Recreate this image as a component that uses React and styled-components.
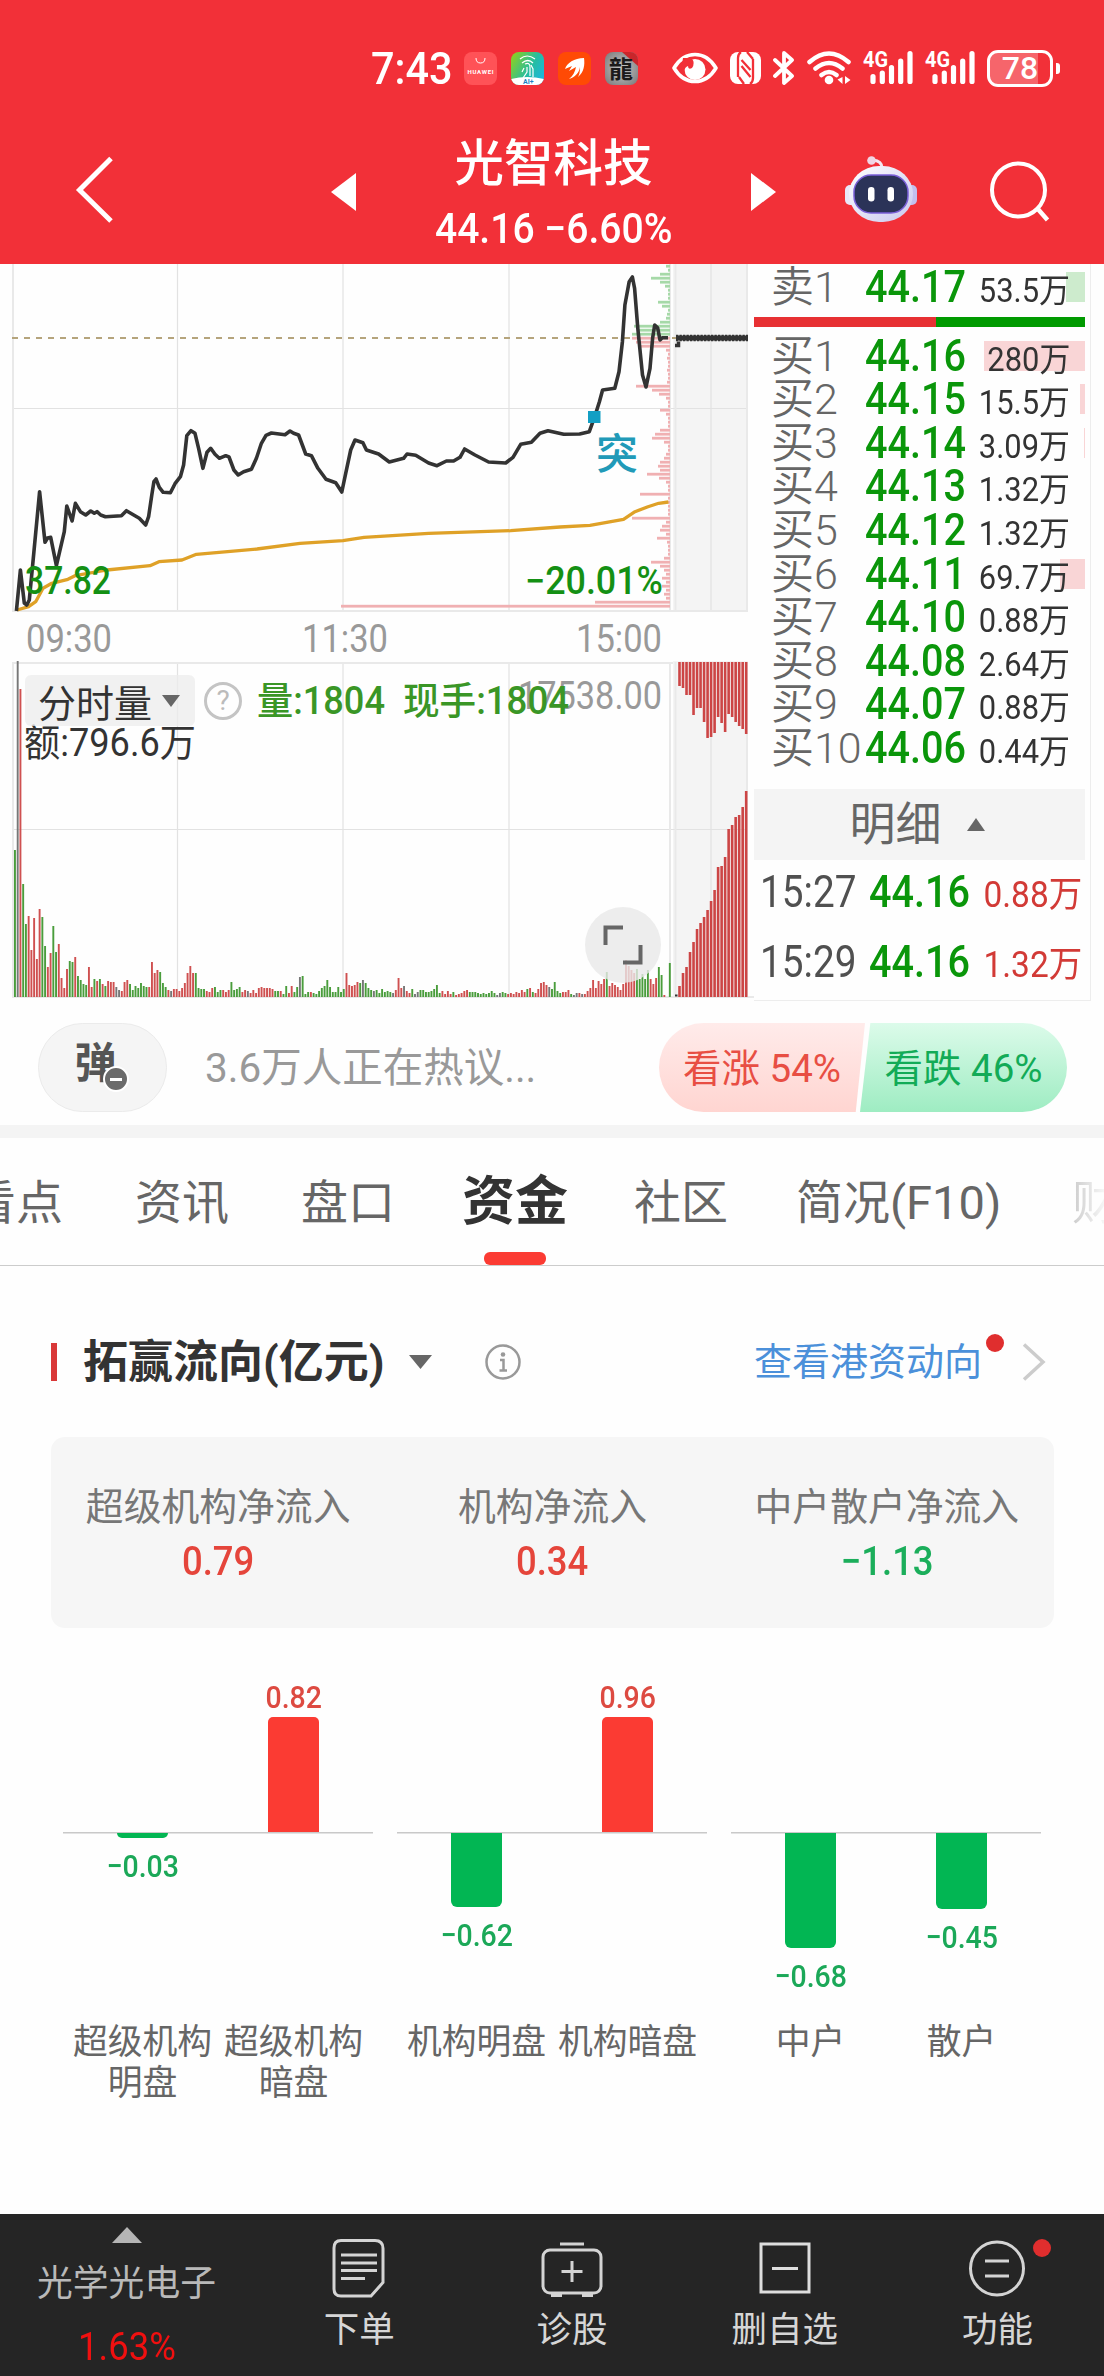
import React from "react";
import styled, { createGlobalStyle } from "styled-components";

const GlobalStyle = createGlobalStyle`
  * {
    box-sizing: border-box;
  }
  body {
    margin: 0;
    background: #fff;
    font-family: Roboto, "Noto Sans CJK SC", sans-serif;
  }
  svg {
    display: block;
    flex: none;
  }
`;

const UP = "#fb3b33";
const DOWN = "#02b653";

const pricePoints =
  "16.4,611 20.4,570 24.3,603 26.8,605 29.3,600 33.9,552 39.6,491.7 45,542.3 47.5,538 50.7,537.3 56.4,565.7 64.3,531.7 66.8,506 72.1,521 75.4,503.3 80.4,511.7 85.7,515 90.7,511 94.3,513.3 97,511.7 100.7,515 105.4,516.7 121.4,515.7 126.4,510.7 139.3,518.3 145.7,525 148.6,516.7 151.8,495 153.9,481.7 156,479 159.3,487.3 163.2,492.3 170.4,492.7 175,483.7 180.4,476.7 183.6,465 186.8,435.7 191,430.7 195,433.3 198.6,448.3 202.9,468.3 207,452.3 210.7,448.3 215,454.3 219.3,458.3 225.7,455.7 229,457 233.9,470 238.2,475 243.6,471.7 251.4,469.3 256.4,458.3 261.4,443.3 266,435.3 271.4,433 285,434.7 290,431 293.6,433.3 298.6,435 305.7,454 311.4,455.7 317.9,468.3 326,479.3 335.7,482.7 341.8,492 345.7,473.3 350.7,450 355,440 362.9,442.7 366.4,450 378.6,454 389.3,462 403.6,458.3 407,454 415.7,455.3 428.6,463 437,465.7 446.4,461 453.6,461 460,457.3 464.6,449 475,455 488.6,462 505.7,463 513,457.3 520.7,444.3 531.4,442.3 540,433.3 548,430.7 563.7,434.3 579.6,434 589.3,431.7 594.7,416.7 599.4,401.7 602.6,390 614.8,388.3 619,371.7 622.4,341.7 624.9,305 629.2,281.7 632.4,277 634.6,288.3 637.8,328.3 642.5,375 646,387 650,368.3 652.6,338.3 654.7,325 657.6,327.7 660,340 662.3,337.7 668,337.7";

const averagePoints =
  "17,610 28.6,606.7 35.7,601.7 43,588.3 51.8,583.3 67.9,579.3 75,575.7 107,570 150,565.7 159,561.7 182,560 196.4,554.3 257,549 300,543.3 343,540.7 364,537.3 428.6,533.3 510.7,530.7 560,527 590,525.3 623.5,519.3 635,511.7 648,506.7 658.7,503.3 668.4,502";

const chips = [
  4, 2, 10, 19, 10, 5, 2, 2, 2, 12, 8, 2, 3, 4, 10, 36, 33, 38, 38, 34, 30, 4,
  2, 3, 2, 2, 3, 2, 2, 3, 34, 18, 11, 4, 2, 2, 10, 4, 2, 2, 2, 10, 15, 18, 6, 2,
  2, 4, 6, 10, 12, 10, 23, 11, 4, 2, 2, 30, 2, 2, 2, 2, 2, 38, 4, 8, 10, 4, 13,
  3, 2, 2, 2, 6, 19, 10, 6, 4, 8, 4, 8, 4, 6, 4, 75, 329,
];

// one entry per minute: bar height + colour (r up, g down, k flat)
const volumes =
  "147g 337k 308r 113g 73g 81r 47r 79r 38r 88r 80g 51g 30r 44r 71g 45g 53r 19r 9r 28r 36g 35g 40r 21g 17g 13g 12g 30r 10r 18g 16r 18g 13r 11g 16r 15r 15r 10k 7k 6r 15r 17r 13g 7g 11g 9g 14g 11g 10g 10r 35r 24r 27r 25g 14g 10g 7r 6k 8r 8r 6r 9r 14r 24r 31r 24r 24g 9g 8g 8g 6r 5r 9r 10g 5g 7g 7r 5r 7r 15g 7g 8g 10g 5r 7r 6k 4r 7r 4r 9r 10r 9r 9r 9r 8r 6g 6g 6r 3g 11g 4r 11r 5g 10g 20k 21g 3g 5g 5r 4g 3g 6g 9g 11g 17g 10g 5g 5g 10g 5g 8g 24r 12r 11r 12r 15r 14g 17k 14g 9g 7g 6k 7g 4g 8g 5g 6g 5g 4k 7r 19r 9r 11k 6r 4r 8g 3k 5k 7g 7g 5g 5g 6g 8g 12g 4g 6r 3r 6r 3r 5g 2r 3r 4r 6r 7r 5g 5g 5g 4g 3g 4g 3g 4g 6g 4g 2k 4k 5g 4g 3r 4r 3r 5r 4r 7r 5r 8g 9r 5g 4r 8r 14r 15r 12r 10k 8g 15g 6g 4g 5r 5r 7r 3g 2k 4k 4r 3k 3r 6r 9r 17r 9r 16r 13r 18r 25g 11r 14r 12r 10r 7r 13r 37r 31r 27r 24r 28g 18g 23g 18g 27g 18r 13r 19r 30g 22g 2r 0g 34g".split(
    " "
  );
const volumeColors = { r: "#cf5050", g: "#4a9d3c", k: "#777" };

const afterMatched = [
  11, 24, 30, 45, 55, 68, 74, 80, 87, 96, 107, 130, 131, 140, 168, 172, 180,
  182, 190, 206,
];
const afterPending = [
  24, 26, 33, 33, 53, 46, 46, 60, 76, 75, 71, 55, 61, 70, 52, 55, 60, 64, 67,
  72,
];

const buyRows = [
  { label: "买1", price: "44.16", volume: "280万", depth: 101 },
  { label: "买2", price: "44.15", volume: "15.5万", depth: 5 },
  { label: "买3", price: "44.14", volume: "3.09万", depth: 1 },
  { label: "买4", price: "44.13", volume: "1.32万", depth: 0 },
  { label: "买5", price: "44.12", volume: "1.32万", depth: 0 },
  { label: "买6", price: "44.11", volume: "69.7万", depth: 25 },
  { label: "买7", price: "44.10", volume: "0.88万", depth: 0 },
  { label: "买8", price: "44.08", volume: "2.64万", depth: 0 },
  { label: "买9", price: "44.07", volume: "0.88万", depth: 0 },
  { label: "买10", price: "44.06", volume: "0.44万", depth: 0 },
];

const ticks = [
  { time: "15:27", price: "44.16", volume: "0.88万" },
  { time: "15:29", price: "44.16", volume: "1.32万" },
];

const totals = [
  { label: "超级机构净流入", value: "0.79", color: "#e5453b" },
  { label: "机构净流入", value: "0.34", color: "#e5453b" },
  { label: "中户散户净流入", value: "−1.13", color: "#1bae5b" },
];

const flows = [
  [
    { label: "超级机构明盘", value: "−0.03", height: 5 },
    { label: "超级机构暗盘", value: "0.82", height: 115, up: true },
  ],
  [
    { label: "机构明盘", value: "−0.62", height: 74 },
    { label: "机构暗盘", value: "0.96", height: 115, up: true },
  ],
  [
    { label: "中户", value: "−0.68", height: 115 },
    { label: "散户", value: "−0.45", height: 76 },
  ],
];

function Signal() {
  return (
    <svg width="50" height="36" viewBox="0 0 50 36" overflow="visible">
      <text
        x="0"
        y="17"
        fontSize="21.5"
        fontWeight="700"
        fill="#fff"
        textLength="25"
        lengthAdjust="spacingAndGlyphs"
      >
        4G
      </text>
      <path
        d="M10 26.500v5M19.300 23v8.500M28.500 17.500v14M37.700 11v20.500M47 3.500v28"
        stroke="#fff"
        strokeWidth="5.200"
        strokeLinecap="round"
      />
    </svg>
  );
}

function StatusIcons() {
  return (
    <>
      <svg width="46" height="36" viewBox="0 0 46 36">
        <path
          d="M2 18C8 8 15 4.500 23 4.500S38 8 44 18C38 28 31 31.500 23 31.500S8 28 2 18z"
          fill="none"
          stroke="#fff"
          strokeWidth="3.600"
          strokeLinejoin="round"
        />
        <circle cx="23" cy="19.500" r="10.500" fill="#fff" />
        <path d="M11 8h8.500q4 5 .5 10-4 2-4-2-3 1-4 5h-3z" fill="#f23038" />
      </svg>
      <svg width="31" height="36" viewBox="0 0 31 36">
        <rect x="0" y="2" width="31" height="32" rx="8" fill="#fff" />
        <g fill="none" stroke="#f23038" strokeWidth="2.300">
          <path d="M11 2q-3 2-3 6v19M20 34q3-2 3-6V9" />
          <path d="M11.500 10l9 10M11.500 16l9 11M9 27l5 7M17 2l6 7" />
        </g>
      </svg>
      <svg width="22" height="36" viewBox="0 0 22 36">
        <path
          d="M2 10l17 16-8 7V3l8 7L2 26"
          fill="none"
          stroke="#fff"
          strokeWidth="3.800"
          strokeLinejoin="round"
          strokeLinecap="round"
        />
      </svg>
      <svg width="44" height="36" viewBox="0 0 44 36">
        <g fill="none" stroke="#fff" strokeWidth="4.500" strokeLinecap="round">
          <path d="M2.500 12Q22-5 41.500 12M8.500 18.500q13.500-11 27 0M14.500 25q7.500-6 15 0" />
        </g>
        <circle cx="22" cy="30" r="4.300" fill="#fff" />
        <path d="M35.500 27v7l-5-4.500zM38 34v-8l5.500 4z" fill="#fff" />
      </svg>
      <Signal />
      <Signal />
    </>
  );
}

function Robot() {
  return (
    <svg width="72" height="68" viewBox="0 0 72 68">
      <defs>
        <linearGradient id="shell" x1="0" y1="0" x2="1" y2="1">
          <stop offset="0" stopColor="#fff" />
          <stop offset="1" stopColor="#c9c8ee" />
        </linearGradient>
      </defs>
      <path d="M37 12q0-7-9-8" fill="none" stroke="#f5e6f0" strokeWidth="3" />
      <circle cx="26.500" cy="4.500" r="4.300" fill="#f0d5e4" />
      <rect x="0" y="29" width="12" height="20" rx="5" fill="#e9e7f8" />
      <rect x="60" y="29" width="12" height="20" rx="5" fill="#c3bfee" />
      <rect x="4" y="10" width="64" height="56" rx="30" fill="url(#shell)" />
      <rect x="9" y="19" width="54" height="38" rx="17" fill="#2b3358" stroke="#7a5fd8" strokeWidth="1.500" />
      <rect x="23" y="31" width="6.500" height="14.500" rx="3.200" fill="#fff" />
      <rect x="42.500" y="31" width="6.500" height="14.500" rx="3.200" fill="#fff" />
    </svg>
  );
}

function AppIcons() {
  return (
    <AppIconRow>
      <AppIcon $bg="#ff5257">
        <svg width="33" height="33" viewBox="0 0 33 33">
          <path d="M12 6q0 5 4.500 5T21 6" fill="none" stroke="#fff" strokeWidth="1" />
          <text x="3.500" y="21.500" fontSize="6" fontWeight="700" fill="#fff" textLength="26">
            HUAWEI
          </text>
        </svg>
      </AppIcon>
      <AppIcon $bg="linear-gradient(120deg, #84cf2c 10%, #26bda0 55%, #17b5ee)">
        <svg width="33" height="33" viewBox="0 0 33 33">
          <g fill="none" stroke="#fff" strokeWidth="1.200">
            <path d="M9 7q7-6 15 0M11 11q6-5 11 0M14 12q5-2 5 3v9M16 15v5l-4 6M20 13l2 4v8M13 16l-2 4" />
          </g>
          <path d="M0 27q16-4 33 0v6H0z" fill="#fff" />
          <text x="12" y="32" fontSize="7" fontWeight="700" fill="#1b7fc4">
            AI+
          </text>
        </svg>
      </AppIcon>
      <AppIcon $bg="#ff4a05">
        <svg width="33" height="33" viewBox="0 0 33 33">
          <path
            d="M26 6C16 6 9 11 7 17l7-3-3 5 7-4c-1 5-3 9-7 12 6-2 10-6 11-12q0 7-2 10c6-5 7-12 6-19z"
            fill="#fff"
          />
        </svg>
      </AppIcon>
      <AppIcon $bg="radial-gradient(#c9c9c9, #777)">
        <svg width="33" height="33" viewBox="0 0 33 33">
          <path d="M17 0h16v14z" fill="#c9262b" />
          <text x="4" y="25.500" fontSize="24" fontWeight="700" fill="#1b1b1b">
            龍
          </text>
        </svg>
      </AppIcon>
    </AppIconRow>
  );
}

function TopBar() {
  return (
    <Top>
      <Status>
        <Clock>7:43</Clock>
        <AppIcons />
        <StatusIcons />
        <Battery>
          <BatteryText>78</BatteryText>
        </Battery>
      </Status>
      <Nav>
        <svg width="40" height="72" viewBox="0 0 40 72">
          <path d="M36 4.500L4.500 36 36 67" fill="none" stroke="#fff" strokeWidth="5" />
        </svg>
        <svg width="25" height="38" viewBox="0 0 25 38">
          <path d="M25 0v38L0 19z" fill="#fff" />
        </svg>
        <Stock>
          <StockName>光智科技</StockName>
          <StockPrice>44.16 −6.60%</StockPrice>
        </Stock>
        <svg width="25" height="38" viewBox="0 0 25 38">
          <path d="M0 0v38l25-19z" fill="#fff" />
        </svg>
        <Robot />
        <svg width="62" height="62" viewBox="0 0 62 62">
          <circle cx="30.500" cy="29" r="26.500" fill="none" stroke="#fff" strokeWidth="4" />
          <path d="M49 47l10.500 12" stroke="#fff" strokeWidth="4.500" />
        </svg>
      </Nav>
    </Top>
  );
}

function ChartText({ x, y, width, size = 38, color = "#999", weight = 400, children }) {
  return (
    <text
      x={x}
      y={y}
      fontSize={size}
      fontWeight={weight}
      fill={color}
      textLength={width}
      lengthAdjust="spacingAndGlyphs"
    >
      {children}
    </text>
  );
}

function PriceChart() {
  return (
    <svg width="754" height="397" viewBox="0 264 754 397">
      <rect x="673" y="264" width="75" height="347" fill="#f4f4f4" />
      <g stroke="#e2e2e2" strokeWidth="1.200">
        <path d="M177.500 264v347M343 264v347M509 264v347M711 264v347M13 408.500h735" />
      </g>
      <g stroke="#e9e9e9" strokeWidth="2">
        <path d="M13 264v347M670 264v347M675.500 264v347M747 264v347M12 611h736" />
      </g>
      <path d="M12 338h664" stroke="#b5a47c" strokeWidth="1.800" strokeDasharray="6 6" />
      {chips.map((len, i) => (
        <rect
          key={i}
          x={670 - len}
          y={264.800 + i * 4}
          width={len}
          height="2.800"
          fill={i < 18 ? "#a6d9a8" : "#f0b0b2"}
        />
      ))}
      <polyline points={averagePoints} fill="none" stroke="#dfa127" strokeWidth="3.300" strokeLinejoin="round" />
      <polyline points={pricePoints} fill="none" stroke="#333" strokeWidth="3.600" strokeLinejoin="round" />
      <path d="M675 345.500h3.500v-4" fill="none" stroke="#333" strokeWidth="3.500" />
      <path d="M676 338h72" stroke="#333" strokeWidth="5" />
      <path d="M676 338h72" stroke="#333" strokeWidth="6.500" strokeDasharray="2.300 1.200" />
      <rect x="588" y="411" width="12.500" height="12" fill="#139fc4" />
      <ChartText x="596" y="469" width="42" size="42" color="#219ab8" weight="500">
        突
      </ChartText>
      <ChartText x="25" y="594" width="86" color="#149014" weight="500">
        37.82
      </ChartText>
      <ChartText x="525" y="594" width="138" color="#149014" weight="500">
        −20.01%
      </ChartText>
      <ChartText x="26" y="652" width="86">
        09:30
      </ChartText>
      <ChartText x="302" y="652" width="86">
        11:30
      </ChartText>
      <ChartText x="576" y="652" width="86">
        15:00
      </ChartText>
    </svg>
  );
}

function VolumeChart() {
  return (
    <svg width="754" height="337" viewBox="0 661 754 337">
      <rect x="673" y="661" width="75" height="336" fill="#f4f4f4" />
      <g stroke="#e2e2e2" strokeWidth="1.200">
        <path d="M177.500 663v334M343 663v334M509 663v334M711 663v334M13 829.500h735" />
      </g>
      <g stroke="#e9e9e9" strokeWidth="2">
        <path d="M13 662v335M670 662v335M675.500 662v335M747 662v335M12 663h661M12 997h1078" />
      </g>
      {volumes.map((v, i) => {
        const height = parseInt(v, 10);
        return (
          <rect
            key={i}
            x={14 + i * 2.74}
            y={997 - height}
            width="1.900"
            height={height}
            fill={volumeColors[v.slice(-1)]}
          />
        );
      })}
      <rect x="675" y="994.500" width="2.500" height="2" fill="#333" />
      {afterMatched.map((h, i) => (
        <rect key={i} x={678.200 + i * 3.51} y={997 - h} width="2.600" height={h} fill="#cc4545" />
      ))}
      {afterPending.map((h, i) => (
        <rect key={i} x={678.200 + i * 3.51} y="662" width="2.600" height={h} fill="#cc4545" />
      ))}
      <ChartText x="518" y="709" width="144">
        17538.00
      </ChartText>
      <ChartText x="257" y="714" width="128" color="#3a9626" weight="500">
        量:1804
      </ChartText>
      <ChartText x="403" y="714" width="166" color="#3a9626" weight="500">
        现手:1804
      </ChartText>
      <ChartText x="24" y="756" width="172" color="#333">
        额:796.6万
      </ChartText>
    </svg>
  );
}

function OrderRow({ label, price, volume, depth, sell }) {
  return (
    <BookRow>
      <Depth style={{ width: depth }} $sell={sell} />
      <BookLabel>{label}</BookLabel>
      <BookPrice>{price}</BookPrice>
      <BookVolume>{volume}</BookVolume>
    </BookRow>
  );
}

function Quote() {
  return (
    <QuoteArea>
      <Charts>
        <PriceChart />
        <VolumeChart />
        <IndicatorPicker>
          <Indicator>
            分时量
            <svg width="20" height="12" viewBox="0 0 20 12">
              <path d="M1 0h18l-9 12z" fill="#666" />
            </svg>
          </Indicator>
          <Help>?</Help>
        </IndicatorPicker>
        <Expand>
          <svg width="40" height="40" viewBox="0 0 40 40">
            <path d="M2.500 20V2.500H20M37.500 20v17.500H20" fill="none" stroke="#666" strokeWidth="4" />
          </svg>
        </Expand>
      </Charts>
      <Book>
        <OrderRow label="卖1" price="44.17" volume="53.5万" depth={19} sell />
        <Ratio />
        {buyRows.map((row) => (
          <OrderRow key={row.label} {...row} />
        ))}
        <DetailHead>
          明细
          <svg width="18" height="13" viewBox="0 0 18 13">
            <path d="M0 13h18L9 0z" fill="#666" />
          </svg>
        </DetailHead>
        {ticks.map((tick) => (
          <TickRow key={tick.time}>
            <TickTime>{tick.time}</TickTime>
            <TickPrice>{tick.price}</TickPrice>
            <TickVolume>{tick.volume}</TickVolume>
          </TickRow>
        ))}
      </Book>
    </QuoteArea>
  );
}

function Discussion() {
  return (
    <DiscussionRow>
      <Danmu>
        弹
        <DanmuMinus />
      </Danmu>
      <Hot>3.6万人正在热议...</Hot>
      <Vote>
        <VoteUp>
          <VoteText>看涨 54%</VoteText>
        </VoteUp>
        <VoteDown>
          <VoteText>看跌 46%</VoteText>
        </VoteDown>
      </Vote>
    </DiscussionRow>
  );
}

function FundFlow() {
  return (
    <Section>
      <SectionHead>
        <Mark />
        <SectionTitle>拓赢流向(亿元)</SectionTitle>
        <svg width="23" height="14" viewBox="0 0 23 14">
          <path d="M0 0h23L11.500 14z" fill="#666" />
        </svg>
        <svg width="36" height="36" viewBox="0 0 36 36">
          <circle cx="18" cy="18" r="16.500" fill="none" stroke="#999" strokeWidth="2.500" />
          <circle cx="18" cy="10.500" r="2.300" fill="#999" />
          <path d="M15 16h3.500v10M14.500 26.500h7.500" fill="none" stroke="#999" strokeWidth="2.500" />
        </svg>
        <SectionLink>
          查看港资动向
          <Dot />
        </SectionLink>
        <svg width="24" height="38" viewBox="0 0 24 38">
          <path d="M2 1.500L21 19 2 36.500" fill="none" stroke="#ccc" strokeWidth="3.500" />
        </svg>
      </SectionHead>
      <Totals>
        {totals.map((item) => (
          <Total key={item.label}>
            <TotalLabel>{item.label}</TotalLabel>
            <TotalValue $color={item.color}>{item.value}</TotalValue>
          </Total>
        ))}
      </Totals>
      <FlowChart>
        {flows.map((group, i) => (
          <FlowGroup key={i}>
            {group.map((bar) => (
              <FlowColumn key={bar.label}>
                <FlowUpper>
                  {bar.up && (
                    <>
                      <FlowValue $up>{bar.value}</FlowValue>
                      <FlowBar $up style={{ height: bar.height }} />
                    </>
                  )}
                </FlowUpper>
                <FlowLower>
                  {!bar.up && (
                    <>
                      <FlowBar style={{ height: bar.height }} />
                      <FlowValue>{bar.value}</FlowValue>
                    </>
                  )}
                </FlowLower>
                <FlowLabel>{bar.label}</FlowLabel>
              </FlowColumn>
            ))}
          </FlowGroup>
        ))}
      </FlowChart>
    </Section>
  );
}

function BottomNav() {
  return (
    <Bottom>
      <Sector>
        <svg width="30" height="16" viewBox="0 0 30 16">
          <path d="M0 16h30L15 0z" fill="#b5b5b5" />
        </svg>
        <SectorName>光学光电子</SectorName>
        <SectorChange>1.63%</SectorChange>
      </Sector>
      <BottomItem>
        <svg width="60" height="60" viewBox="0 0 60 60" fill="none" stroke="#d4d4d4" strokeWidth="3">
          <path d="M12 2.500h34q8 0 8 8v34L42 58H12q-7 0-7-7V10q0-7.500 7-7.500z" />
          <path d="M12 17h36M12 25h36M12 32.500h36M12 40.500h24" />
        </svg>
        下单
      </BottomItem>
      <BottomItem>
        <svg width="64" height="60" viewBox="0 0 64 60" fill="none" stroke="#d4d4d4" strokeWidth="3">
          <rect x="3" y="12" width="58" height="43" rx="7" />
          <path d="M20 6h24M32 23v21M21.500 33.500h21M11 57.500h11M42 57.500h11" />
        </svg>
        诊股
      </BottomItem>
      <BottomItem>
        <svg width="60" height="60" viewBox="0 0 60 60" fill="none" stroke="#dedede" strokeWidth="3">
          <rect x="6" y="6" width="48" height="48" />
          <path d="M17 30.500h26" />
        </svg>
        删自选
      </BottomItem>
      <BottomItem>
        <svg width="60" height="60" viewBox="0 0 60 60" fill="none" stroke="#d4d4d4" strokeWidth="3">
          <circle cx="30" cy="30.500" r="26.500" />
          <path d="M18 23h24M18 38h24" />
        </svg>
        功能
        <BottomDot />
      </BottomItem>
    </Bottom>
  );
}

function App() {
  return (
    <Page>
      <GlobalStyle />
      <TopBar />
      <Quote />
      <Discussion />
      <Tabs>
        <Tab $width={95}>看点</Tab>
        <Tab $width={95}>资讯</Tab>
        <Tab $width={94}>盘口</Tab>
        <ActiveTab>资金</ActiveTab>
        <Tab $width={91}>社区</Tab>
        <Tab $width={205}>简况(F10)</Tab>
        <FadedTab $width={48}>财</FadedTab>
      </Tabs>
      <FundFlow />
      <BottomNav />
    </Page>
  );
}

export default App;

const Page = styled.div`
  display: flex;
  flex-direction: column;
  width: 1104px;
  height: 2376px;
  overflow: hidden;
  background: #fefefe;
  color: #333;
  white-space: nowrap;
`;

/* digits are set a little narrower than Roboto draws them */
const Num = styled.span`
  display: inline-block;
  transform: scaleX(0.88);
  transform-origin: left;
`;

const Top = styled.header`
  height: 264px;
  flex: none;
  background: #f23038;
  color: #fff;
`;
const Status = styled.div`
  display: flex;
  align-items: center;
  gap: 12px;
  height: 136px;
  padding-left: 371px;
`;
const Clock = styled(Num)`
  width: 81px;
  font-size: 45px;
  font-weight: 500;
  transform: scaleX(0.92);
`;
const AppIconRow = styled.div`
  display: flex;
  gap: 14px;
  margin-right: 22px;
`;
const AppIcon = styled.div`
  width: 33px;
  height: 33px;
  border-radius: 8px;
  overflow: hidden;
  background: ${(props) => props.$bg};
`;
const Battery = styled.div`
  position: relative;
  display: flex;
  align-items: center;
  justify-content: center;
  width: 66px;
  height: 37px;
  border: 3px solid #fff;
  border-radius: 11px;
  background: linear-gradient(90deg, #f6656b 80%, transparent 80%);
  &::after {
    content: "";
    position: absolute;
    right: -10px;
    top: 10px;
    width: 4px;
    height: 11px;
    border-radius: 0 3px 3px 0;
    background: #fff;
  }
`;
const BatteryText = styled.span`
  font-size: 32px;
  font-weight: 500;
  line-height: 31px;
`;
const Nav = styled.div`
  display: flex;
  align-items: center;
  height: 108px;
  padding-left: 75px;
  svg:nth-child(2) {
    margin: 3px 0 0 216px;
  }
  svg:nth-child(4) {
    margin: 4px 0 0;
  }
  svg:nth-child(5) {
    margin-left: 69px;
  }
  svg:nth-child(6) {
    margin: 4px 0 0 71px;
  }
`;
const Stock = styled.div`
  display: flex;
  flex-direction: column;
  align-items: center;
  width: 395px;
  padding-top: 15px;
`;
const StockName = styled.div`
  font-size: 49.5px;
  font-weight: 500;
  line-height: 62px;
`;
const StockPrice = styled.div`
  font-size: 42px;
  font-weight: 500;
  line-height: 68px;
  transform: scaleX(0.93);
`;

const QuoteArea = styled.section`
  display: grid;
  grid-template-columns: 754px 337px;
  height: 734px;
  flex: none;
`;
const Charts = styled.div`
  position: relative;
`;
const IndicatorPicker = styled.div`
  position: absolute;
  left: 25px;
  top: 411px;
  display: flex;
  align-items: center;
  gap: 9px;
`;
const Indicator = styled.div`
  display: flex;
  align-items: center;
  gap: 9px;
  width: 170px;
  height: 51px;
  padding-left: 13px;
  border-radius: 6px;
  background: rgba(236, 236, 236, 0.75);
  font-size: 38px;
  color: #333;
`;
const Help = styled.div`
  width: 38px;
  height: 38px;
  border: 3px solid #c4c4c4;
  border-radius: 50%;
  text-align: center;
  font-size: 28px;
  line-height: 32px;
  color: #bbb;
`;
const Expand = styled.div`
  position: absolute;
  left: 585px;
  top: 643px;
  display: flex;
  align-items: center;
  justify-content: center;
  width: 76px;
  height: 76px;
  border-radius: 50%;
  background: rgba(232, 232, 232, 0.8);
`;

const Book = styled.div`
  border-right: 1.5px solid #ededed;
  border-bottom: 1.5px solid #ededed;
  padding: 1px 5px 0 0;
`;
const BookRow = styled.div`
  position: relative;
  display: grid;
  grid-template-columns: 94px 114px 91px;
  align-items: baseline;
  height: 43.6px;
  padding-left: 17px;
  line-height: 43.6px;
`;
const BookLabel = styled.span`
  font-size: 43px;
  font-weight: 350;
  color: #666;
`;
const BookPrice = styled(Num)`
  position: relative;
  font-size: 45px;
  font-weight: 500;
  color: #0a960a;
`;
const BookVolume = styled.span`
  position: relative;
  justify-self: end;
  font-size: 32.5px;
  color: #333;
  transform: scaleX(0.95);
  transform-origin: right;
`;
const Depth = styled.div`
  position: absolute;
  right: 0;
  top: 7px;
  height: 30px;
  background: ${(props) => (props.$sell ? "#cdebcd" : "#f9d5d6")};
`;
const Ratio = styled.div`
  height: 10px;
  margin: 8px 0 7px;
  background: linear-gradient(90deg, #e73033 55%, #009a00 55%);
`;
const DetailHead = styled.div`
  display: flex;
  align-items: center;
  justify-content: center;
  gap: 25px;
  height: 71px;
  margin-top: 19px;
  padding-right: 5px;
  background: #f4f4f4;
  font-size: 46px;
  line-height: 60px;
  color: #666;
`;
const TickRow = styled.div`
  display: grid;
  grid-template-columns: 109px 114px 99px;
  align-items: baseline;
  height: 70px;
  padding-left: 6px;
  line-height: 64px;
`;
const TickTime = styled(Num)`
  font-size: 44px;
  color: #505050;
`;
const TickPrice = styled(Num)`
  font-size: 45px;
  font-weight: 500;
  color: #0a960a;
`;
const TickVolume = styled.span`
  justify-self: end;
  font-size: 36px;
  color: #d23a36;
  transform: scaleX(0.93);
  transform-origin: right;
`;

const DiscussionRow = styled.div`
  display: flex;
  align-items: center;
  height: 140px;
  flex: none;
  padding: 12px 37px 0 38px;
  border-bottom: 13px solid #f4f4f4;
`;
const Danmu = styled.div`
  position: relative;
  width: 129px;
  height: 89px;
  border: 1px solid #ebebeb;
  border-radius: 45px;
  background: #f5f5f5;
  text-align: center;
  font-size: 42px;
  font-weight: 700;
  line-height: 80px;
  text-indent: -14px;
  color: #555;
`;
const DanmuMinus = styled.div`
  position: absolute;
  left: 64px;
  top: 42px;
  width: 26px;
  height: 26px;
  border: 2px solid #fff;
  border-radius: 50%;
  background: linear-gradient(#fff, #fff) center / 12px 3px no-repeat, #6b6b6b;
`;
const Hot = styled.div`
  flex: 1;
  margin-left: 38px;
  padding-bottom: 6px;
  font-size: 40.5px;
  color: #999;
`;
const Vote = styled.div`
  display: flex;
  width: 408px;
  height: 89px;
  border-radius: 45px;
  overflow: hidden;
`;
const VoteUp = styled.div`
  display: flex;
  align-items: center;
  justify-content: center;
  width: 206px;
  padding-bottom: 6px;
  background: linear-gradient(#ffebea, #ffd5d1);
  color: #e84e43;
  clip-path: polygon(0 0, 100% 0, 95.5% 100%, 0 100%);
`;
const VoteDown = styled.div`
  display: flex;
  align-items: center;
  justify-content: center;
  width: 207px;
  margin-left: -5px;
  padding-bottom: 6px;
  background: linear-gradient(#dcfbea, #9eecc2);
  color: #12ab57;
  clip-path: polygon(5% 0, 100% 0, 100% 100%, 0 100%);
`;
const VoteText = styled.span`
  font-size: 38.5px;
`;

const Tabs = styled.nav`
  display: flex;
  height: 128px;
  flex: none;
  margin-left: -31px;
  border-bottom: 1.5px solid #ccc;
  line-height: 129px;
`;
const Tab = styled.div`
  width: ${(props) => props.$width}px;
  flex: none;
  margin-right: 71px;
  font-size: 47px;
  color: #666;
`;
const ActiveTab = styled(Tab)`
  position: relative;
  width: 106px;
  margin: 0 66px 0 -4px;
  font-size: 53px;
  font-weight: 700;
  color: #333;
  &::after {
    content: "";
    position: absolute;
    left: 22px;
    bottom: 0;
    width: 62px;
    height: 13px;
    border-radius: 6px;
    background: ${UP};
  }
`;
const FadedTab = styled(Tab)`
  margin-right: 0;
  background: linear-gradient(90deg, #ccc, #fefefe 80%);
  background-clip: text;
  color: transparent;
`;

const Section = styled.section`
  flex: 1;
  padding: 0 50px 0 51px;
`;
const SectionHead = styled.div`
  display: flex;
  align-items: center;
  height: 171px;
  padding: 20px 8px 0 0;
  svg:nth-of-type(2) {
    margin-left: 53px;
  }
`;
const Mark = styled.div`
  width: 6px;
  height: 38px;
  background: #d93838;
`;
const SectionTitle = styled.h2`
  width: 326px;
  margin: 0 0 0 26px;
  padding-bottom: 7px;
  font-size: 45px;
  font-weight: 700;
`;
const SectionLink = styled.div`
  position: relative;
  margin: 0 40px 0 auto;
  padding-bottom: 6px;
  font-size: 38px;
  color: #4b90da;
`;
const Dot = styled.i`
  position: absolute;
  right: -22px;
  top: 3px;
  width: 18px;
  height: 18px;
  border-radius: 50%;
  background: #e02e2e;
`;
const Totals = styled.div`
  display: grid;
  grid-template-columns: repeat(3, 1fr);
  height: 191px;
  padding-top: 43px;
  border-radius: 14px;
  background: #f6f6f6;
`;
const Total = styled.div`
  text-align: center;
`;
const TotalLabel = styled.div`
  font-size: 37.8px;
  line-height: 54px;
  color: #777;
`;
const TotalValue = styled.div`
  font-size: 40.5px;
  font-weight: 500;
  line-height: 54px;
  color: ${(props) => props.$color};
  transform: scaleX(0.9);
`;
const FlowChart = styled.div`
  display: grid;
  grid-template-columns: repeat(3, 310px);
  gap: 24px;
  padding-left: 12px;
`;
const FlowGroup = styled.div`
  display: flex;
  padding: 0 4px;
  background: linear-gradient(#c9c9c9, #c9c9c9) 0 204px / 100% 1.5px no-repeat;
`;
const FlowColumn = styled.div`
  display: flex;
  flex-direction: column;
  align-items: center;
  width: 151px;
`;
const FlowUpper = styled.div`
  display: flex;
  flex-direction: column;
  align-items: center;
  justify-content: flex-end;
  height: 204px;
`;
const FlowLower = styled.div`
  display: flex;
  flex-direction: column;
  align-items: center;
  height: 190px;
  padding-top: 1px;
`;
const FlowBar = styled.div`
  width: 51px;
  background: ${(props) => (props.$up ? UP : DOWN)};
  border-radius: ${(props) => (props.$up ? "5px 5px 0 0" : "0 0 6px 6px")};
`;
const FlowValue = styled.div`
  font-size: 32px;
  font-weight: 500;
  line-height: 56px;
  margin-bottom: ${(props) => (props.$up ? "-8px" : 0)};
  color: ${(props) => (props.$up ? "#dd4a41" : "#1ba858")};
  transform: scaleX(0.89);
`;
const FlowLabel = styled.div`
  width: 144px;
  text-align: center;
  font-size: 34.8px;
  line-height: 41px;
  white-space: normal;
  word-break: break-all;
  color: #666;
`;

const Bottom = styled.footer`
  display: flex;
  height: 162px;
  flex: none;
  background: #252525;
`;
const Sector = styled.div`
  display: flex;
  flex-direction: column;
  align-items: center;
  width: 253px;
  padding-top: 13px;
`;
const SectorName = styled.div`
  margin-top: 14px;
  font-size: 35.8px;
  line-height: 54px;
  color: #b9b9b9;
`;
const SectorChange = styled.div`
  margin-top: 8px;
  font-size: 38px;
  line-height: 56px;
  color: #f01010;
  transform: scaleX(0.96);
`;
const BottomItem = styled.div`
  position: relative;
  display: flex;
  flex-direction: column;
  align-items: center;
  width: 212.7px;
  padding-top: 24px;
  font-size: 35.5px;
  line-height: 64px;
  color: #d6d6d6;
`;
const BottomDot = styled(Dot)`
  right: 53px;
  top: 25px;
`;
